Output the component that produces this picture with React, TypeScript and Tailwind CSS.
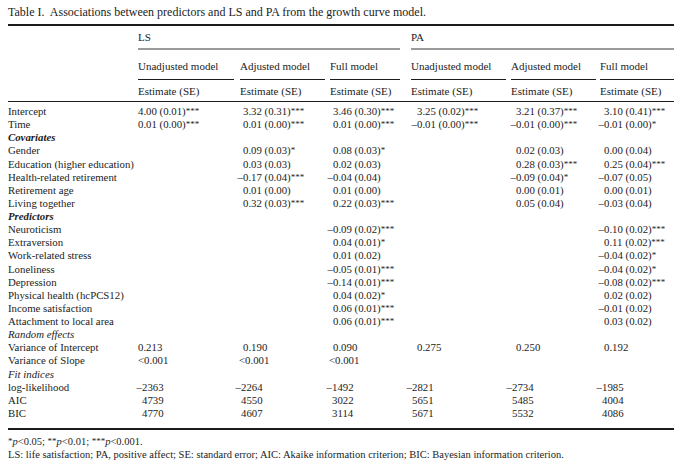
import React from "react";

type Row =
  | { kind: "data"; label: string; v: string[]; fit?: boolean }
  | { kind: "section"; label: string; bold: boolean };

const rows: Row[] = [
  { kind: "data", label: "Intercept", v: ["4.00 (0.01)***", "3.32 (0.31)***", "3.46 (0.30)***", "3.25 (0.02)***", "3.21 (0.37)***", "3.10 (0.41)***"] },
  { kind: "data", label: "Time", v: ["0.01 (0.00)***", "0.01 (0.00)***", "0.01 (0.00)***", "–0.01 (0.00)***", "–0.01 (0.00)***", "–0.01 (0.00)*"] },
  { kind: "section", label: "Covariates", bold: true },
  { kind: "data", label: "Gender", v: ["", "0.09 (0.03)*", "0.08 (0.03)*", "", "0.02 (0.03)", "0.00 (0.04)"] },
  { kind: "data", label: "Education (higher education)", v: ["", "0.03 (0.03)", "0.02 (0.03)", "", "0.28 (0.03)***", "0.25 (0.04)***"] },
  { kind: "data", label: "Health-related retirement", v: ["", "–0.17 (0.04)***", "–0.04 (0.04)", "", "–0.09 (0.04)*", "–0.07 (0.05)"] },
  { kind: "data", label: "Retirement age", v: ["", "0.01 (0.00)", "0.01 (0.00)", "", "0.00 (0.01)", "0.00 (0.01)"] },
  { kind: "data", label: "Living together", v: ["", "0.32 (0.03)***", "0.22 (0.03)***", "", "0.05 (0.04)", "–0.03 (0.04)"] },
  { kind: "section", label: "Predictors", bold: true },
  { kind: "data", label: "Neuroticism", v: ["", "", "–0.09 (0.02)***", "", "", "–0.10 (0.02)***"] },
  { kind: "data", label: "Extraversion", v: ["", "", "0.04 (0.01)*", "", "", "0.11 (0.02)***"] },
  { kind: "data", label: "Work-related stress", v: ["", "", "0.01 (0.02)", "", "", "–0.04 (0.02)*"] },
  { kind: "data", label: "Loneliness", v: ["", "", "–0.05 (0.01)***", "", "", "–0.04 (0.02)*"] },
  { kind: "data", label: "Depression", v: ["", "", "–0.14 (0.01)***", "", "", "–0.08 (0.02)***"] },
  { kind: "data", label: "Physical health (hcPCS12)", v: ["", "", "0.04 (0.02)*", "", "", "0.02 (0.02)"] },
  { kind: "data", label: "Income satisfaction", v: ["", "", "0.06 (0.01)***", "", "", "–0.01 (0.02)"] },
  { kind: "data", label: "Attachment to local area", v: ["", "", "0.06 (0.01)***", "", "", "0.03 (0.02)"] },
  { kind: "section", label: "Random effects", bold: false },
  { kind: "data", label: "Variance of Intercept", v: ["0.213", "0.190", "0.090", "0.275", "0.250", "0.192"] },
  { kind: "data", label: "Variance of Slope", v: ["<0.001", "<0.001", "<0.001", "", "", ""] },
  { kind: "section", label: "Fit indices", bold: false },
  { kind: "data", label: "log-likelihood", v: ["–2363", "–2264", "–1492", "–2821", "–2734", "–1985"], fit: true },
  { kind: "data", label: "AIC", v: ["4739", "4550", "3022", "5651", "5485", "4004"], fit: true },
  { kind: "data", label: "BIC", v: ["4770", "4607", "3114", "5671", "5532", "4086"], fit: true },
];

const colPad = ["pl-[0px]", "pl-[3px]", "pl-[3px]", "pl-[6px]", "pl-[5px]", "pl-[4px]"];
const fitPad = ["pl-[4px]", "pl-[1px]", "pl-[2px]", "pl-[1px]", "pl-[1px]", "pl-[2px]"];

function Stars({ n }: { n: string }) {
  return <span className="text-[9px] relative -top-[1px]">{n}</span>;
}

function Val({ s, ci, fit }: { s: string; ci: number; fit?: boolean }) {
  if (!s) return <div />;
  let rest = s;
  let neg = false;
  let lt = false;
  if (rest.startsWith("–")) {
    neg = true;
    rest = rest.slice(1);
  } else if (rest.startsWith("<")) {
    lt = true;
    rest = rest.slice(1);
  }
  const m = rest.match(/\*+$/);
  const stars = m ? m[0] : "";
  const main = stars ? rest.slice(0, -stars.length) : rest;
  return (
    <div className={`whitespace-nowrap ${fit ? fitPad[ci] : colPad[ci]}`}>
      {neg && <span className="-ml-[5.4px]">–</span>}
      {lt && <span className={ci === 0 ? "" : "-ml-[4px]"}>&lt;</span>}
      {main}
      {stars && <Stars n={stars} />}
    </div>
  );
}

const subRule = ["mr-[6px]", "mr-[5px]", "mr-[11px]", "mr-[5px]", "mr-[4px]", "mr-0"];
const subHeads = ["Unadjusted model", "Adjusted model", "Full model", "Unadjusted model", "Adjusted model", "Full model"];

export default function App() {
  return (
    <div
      className="w-[682px] h-[471px] bg-white text-[#1c1c1c] px-[8px] overflow-hidden"
      style={{ fontFamily: '"Liberation Serif", "Times New Roman", serif' }}
    >
      <div className="pt-[5px] text-[12px] leading-[14px] whitespace-nowrap">
        Table I.&nbsp; Associations between predictors and LS and PA from the growth curve model.
      </div>

      <div className="mt-[5px] border-t-2 border-[#1c1c1c] text-[11px]">
        {/* Header row 1 */}
        <div className="grid grid-cols-[130px_102px_90px_81px_100px_89px_74px]">
          <div />
          <div className="col-span-3 mr-[11px] h-[24px] border-b-2 border-[#9a9a9a] pt-[4px] leading-[14px]">LS</div>
          <div className="col-span-3 h-[24px] border-b-2 border-[#9a9a9a] pt-[4px] leading-[14px]">PA</div>
        </div>
        {/* Header row 2 */}
        <div className="grid grid-cols-[130px_102px_90px_81px_100px_89px_74px]">
          <div />
          {subHeads.map((h, i) => (
            <div key={i} className={`${subRule[i]} h-[30px] border-b border-[#1c1c1c] pt-[9px] leading-[14px] whitespace-nowrap`}>
              {h}
            </div>
          ))}
        </div>
        {/* Header row 3 */}
        <div className="grid grid-cols-[130px_102px_90px_81px_100px_89px_74px] border-b-[1.5px] border-[#1c1c1c]">
          <div className="h-[21px]" />
          {subHeads.map((_, i) => (
            <div key={i} className="h-[21px] pt-[3.5px] leading-[14px] whitespace-nowrap">
              Estimate (SE)
            </div>
          ))}
        </div>

        {/* Body */}
        <div className="pt-[3px] pb-[7.5px] border-b-2 border-[#1c1c1c] text-[10.8px]">
          {rows.map((r, ri) =>
            r.kind === "section" ? (
              <div key={ri} className={`h-[13.13px] leading-[13px] italic ${r.bold ? "font-bold" : ""}`}>
                {r.label}
              </div>
            ) : (
              <div key={ri} className="grid grid-cols-[130px_102px_90px_81px_100px_89px_74px] h-[13.13px] leading-[13px]">
                <div className="whitespace-nowrap">{r.label}</div>
                {r.v.map((s, ci) => (
                  <Val key={ci} s={s} ci={ci} fit={r.fit} />
                ))}
              </div>
            )
          )}
        </div>
      </div>

      <div className="mt-[5.5px] text-[10.5px] leading-[13px] whitespace-nowrap">
        <Stars n="*" />
        <i>p</i>&lt;0.05; <Stars n="**" />
        <i>p</i>&lt;0.01; <Stars n="***" />
        <i>p</i>&lt;0.001.
      </div>
      <div className="text-[10.5px] leading-[12.5px] whitespace-nowrap">
        LS: life satisfaction; PA, positive affect; SE: standard error; AIC: Akaike information criterion; BIC: Bayesian information criterion.
      </div>
    </div>
  );
}
